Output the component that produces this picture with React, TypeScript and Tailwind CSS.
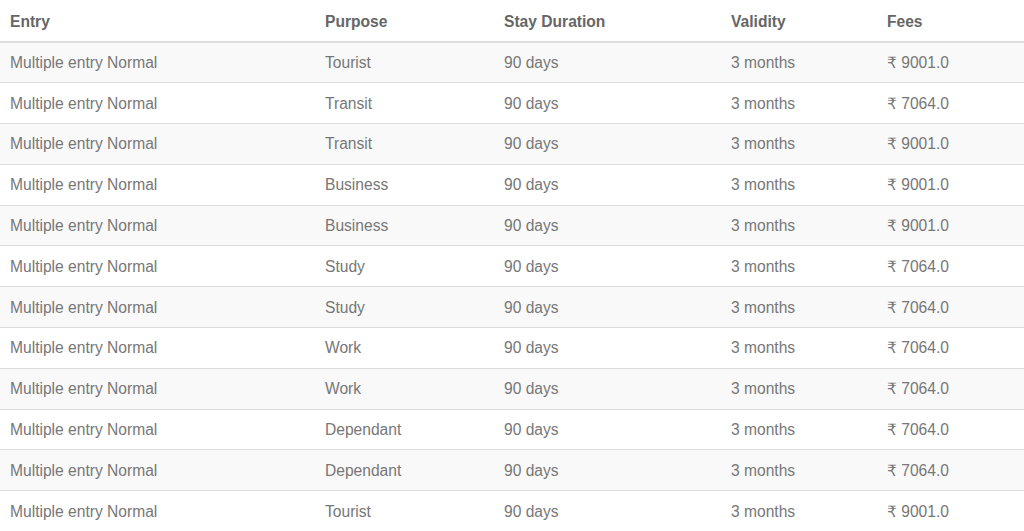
import React from "react";

const rows: [string, string][] = [
  ["Tourist", "9001.0"],
  ["Transit", "7064.0"],
  ["Transit", "9001.0"],
  ["Business", "9001.0"],
  ["Business", "9001.0"],
  ["Study", "7064.0"],
  ["Study", "7064.0"],
  ["Work", "7064.0"],
  ["Work", "7064.0"],
  ["Dependant", "7064.0"],
  ["Dependant", "7064.0"],
  ["Tourist", "9001.0"],
];

export default function App() {
  return (
    <div
      className="w-[1024px] h-[531px] overflow-hidden bg-white"
      style={{ fontFamily: '"Liberation Sans", Arial, "DejaVu Sans", sans-serif' }}
    >
      <table className="w-[1024px] table-fixed border-collapse text-[15.6px] leading-[22px]">
        <colgroup>
          <col className="w-[315px]" />
          <col className="w-[179px]" />
          <col className="w-[227px]" />
          <col className="w-[156px]" />
          <col className="w-[147px]" />
        </colgroup>
        <thead>
          <tr className="h-[42px] text-left text-[#666] font-bold">
            <th className="pl-[10px] pt-[10px] pb-[8px] align-middle border-b-2 border-[#dddddd]">Entry</th>
            <th className="pl-[10px] pt-[10px] pb-[8px] align-middle border-b-2 border-[#dddddd]">Purpose</th>
            <th className="pl-[10px] pt-[10px] pb-[8px] align-middle border-b-2 border-[#dddddd]">Stay Duration</th>
            <th className="pl-[10px] pt-[10px] pb-[8px] align-middle border-b-2 border-[#dddddd]">Validity</th>
            <th className="pl-[10px] pt-[10px] pb-[8px] align-middle border-b-2 border-[#dddddd]">Fees</th>
          </tr>
        </thead>
        <tbody className="text-[#777]">
          {rows.map((r, i) => (
            <tr key={i} className={`h-[40.8px] ${i % 2 === 0 ? "bg-[#f9f9f9]" : "bg-white"}`}>
              <td className="pl-[10px] pt-[1px] pb-0 border-t border-[#dddddd]">Multiple entry Normal</td>
              <td className="pl-[10px] pt-[1px] pb-0 border-t border-[#dddddd]">{r[0]}</td>
              <td className="pl-[10px] pt-[1px] pb-0 border-t border-[#dddddd]">90 days</td>
              <td className="pl-[10px] pt-[1px] pb-0 border-t border-[#dddddd]">3 months</td>
              <td className="pl-[10px] pt-[1px] pb-0 border-t border-[#dddddd]">₹ {r[1]}</td>
            </tr>
          ))}
        </tbody>
      </table>
    </div>
  );
}
